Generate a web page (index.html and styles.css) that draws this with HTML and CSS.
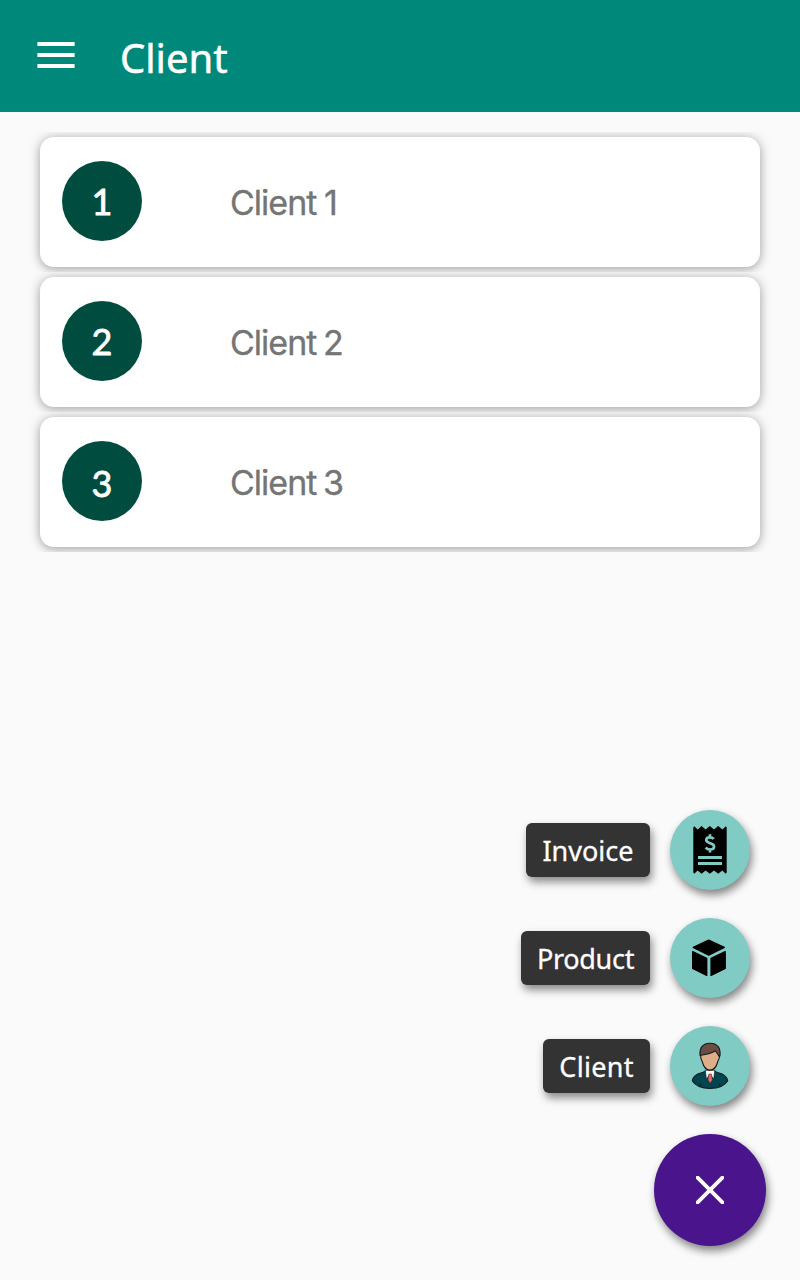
FILE: index.html
```html
<!DOCTYPE html>
<html lang="en">
<head>
<meta charset="utf-8">
<title>Client</title>
<link rel="stylesheet" href="styles.css">
</head>
<body>
<header class="app-bar">
  <svg class="menu-icon" width="38" height="26" viewBox="0 0 38 26"><path d="M.4 0h37.2v4H.4zM.4 11h37.2v4H.4zM.4 22h37.2v4H.4z" fill="#fff"/></svg>
  <h1 class="title">Client</h1>
</header>
<main class="list">
  <div class="row"><div class="card"><span class="badge">1</span><span class="name">Client <span class="num num-one">1</span></span></div></div>
  <div class="row"><div class="card"><span class="badge">2</span><span class="name">Client <span class="num">2</span></span></div></div>
  <div class="row"><div class="card"><span class="badge badge-low">3</span><span class="name">Client <span class="num">3</span></span></div></div>
</main>
<nav class="fab-menu">
  <div class="action">
    <span class="label label-invoice">Invoice</span>
    <button class="mini" aria-label="Invoice">
      <svg width="80" height="80" viewBox="0 0 80 80">
        <path d="M23.3 17.5l1-1.3 3.3 3.2 4-3.4 4 3.4 4.2-3.4 4.2 3.4 4.2-3.4 4.2 3.4 3.3-3.2 1 1.3v45l-1 1.3-3.3-3.4-4.2 3.4-4.2-3.4-4.2 3.4-4.2-3.4-4 3.4-4-3.4-3.3 3.4-1-1.3z"/>
        <path d="M28 46h24v3H28zM28 52h24v3H28z" fill="#80cbc4"/>
        <path d="M43.8 29c-1-1.2-2.3-1.7-4-1.7-2.2 0-3.5 1.1-3.5 2.8 0 4.1 7.8 2.1 7.8 6.4 0 1.8-1.5 3-4 3-1.9 0-3.5-.7-4.4-2M40 24.3v3M40 39.5v3" fill="none" stroke="#80cbc4" stroke-width="2.7"/>
      </svg>
    </button>
  </div>
  <div class="action">
    <span class="label label-product">Product</span>
    <button class="mini" aria-label="Product">
      <svg width="80" height="80" viewBox="0 0 80 80">
        <g stroke="#000" stroke-width="1.4" stroke-linejoin="round"><path d="M38.7 22.2L54.3 29.3 38.7 37 23.2 29.3z"/><path d="M22.7 33.7l14 6.8v16.9l-14-7z"/><path d="M55.2 33.7l-14.1 6.8v16.9l14.1-7z"/></g>
      </svg>
    </button>
  </div>
  <div class="action">
    <span class="label label-client">Client</span>
    <button class="mini" aria-label="Client">
      <svg width="80" height="80" viewBox="0 0 80 80">
        <g stroke="#101c1e" stroke-width="1.1" stroke-linejoin="round">
          <path d="M35.5 44.5c-1 1.2-2 1.7-4 2.2-5.5 1.3-8.6 3.9-9.2 8.1 2.8 4.8 9.5 7.6 17.7 7.6s15-2.8 17.7-7.6c-.7-4.2-3.9-6.8-9.3-8.1-2-.5-3-1-4-2.2z" fill="#004651"/>
          <path d="M35.4 44.2l1 8.8L40 48.4l3.7 4.6 1.1-8.8z" fill="#fff" stroke-width=".6"/>
          <path d="M38.8 48h2.6l1.1 6-2.3 3.4-2.4-3.4z" fill="#e46b60" stroke-width=".5"/>
          <path d="M30.6 26l.2 5.2c0 2 .9 2.6 1.4 4.3 1.2 4.7 3.6 8.6 7.8 8.6s6.6-3.9 7.8-8.6c.5-1.7 1.4-2.3 1.6-4.3L49 25l-8-2z" fill="#dfad89"/>
          <path d="M30.1 29.5c-.8-7.9 2.8-12.2 9.9-12.2s10.8 4.3 10 12.2l-.5 1.2-4.2-6c-3.7 3.5-9.1 3.3-15.2 4.8z" fill="#6d4c41"/>
          <path d="M30.3 57.5v3M49.7 57.5v3" fill="none"/>
        </g>
      </svg>
    </button>
  </div>
  <button class="fab" aria-label="Close">
    <svg width="28" height="28" viewBox="0 0 28 28"><path d="M1.6 1.6l24.8 24.8M26.4 1.6L1.6 26.4" stroke="#fff" stroke-width="3.8" stroke-linecap="round"/></svg>
  </button>
</nav>
</body>
</html>
```
FILE: styles.css
```css
* { box-sizing: border-box; }
body {
  margin: 0;
  width: 800px;
  height: 1280px;
  display: flex;
  flex-direction: column;
  background: #fafafa;
  font-family: "Noto Sans", "Open Sans", sans-serif;
}
button { border: 0; padding: 0; }
svg { display: block; }
.app-bar {
  height: 112px;
  flex: none;
  display: flex;
  align-items: center;
  padding: 0 37px 2px;
  background: #00897b;
}
.title {
  margin: 5px 0 0 45px;
  font-size: 40px;
  line-height: 54px;
  font-weight: 400;
  -webkit-text-stroke: .5px #fff;
  color: #fff;
}
.list { padding-top: 20px; }
.row {
  height: 140px;
  padding: 5px 40px;
  overflow: hidden;
}
.card {
  height: 130px;
  display: flex;
  align-items: center;
  padding: 0 22px 2px;
  border-radius: 14px;
  background: #fff;
  box-shadow: 0 3px 8px rgba(0, 0, 0, .2), 0 0 14px rgba(0, 0, 0, .2);
}
.badge {
  width: 80px;
  height: 80px;
  border-radius: 50%;
  display: flex;
  align-items: center;
  justify-content: center;
  background: #004d40;
  color: #fff;
  font: 400 36px/44px Lato, sans-serif;
  -webkit-text-stroke: .8px #fff;
}
.badge-low { padding-top: 3px; }
.name {
  margin: 4px 0 0 88px;
  color: #757575;
  font: 400 34px/42px Inter, sans-serif;
  letter-spacing: -1px;
  -webkit-text-stroke: .35px #757575;
}
.num { display: inline-block; margin-left: -2px; }
.num-one { margin-left: -1px; }
.fab-menu {
  margin-top: auto;
  padding: 0 34px 34px;
  display: flex;
  flex-direction: column;
  align-items: flex-end;
  gap: 28px;
}
.action {
  display: flex;
  align-items: center;
  gap: 20px;
  margin-right: 16px;
}
.label {
  height: 54px;
  border-radius: 6px;
  display: flex;
  align-items: center;
  justify-content: center;
  background: #333;
  color: #fff;
  font-size: 27px;
  -webkit-text-stroke: .3px #fff;
  box-shadow: 2px 5px 9px rgba(0, 0, 0, .45);
}
.label-invoice { width: 124px; }
.label-product { width: 129px; letter-spacing: -.3px; }
.label-client { width: 107px; letter-spacing: .3px; }
.mini {
  width: 80px;
  height: 80px;
  border-radius: 50%;
  background: #80cbc4;
  box-shadow: 2px 5px 9px rgba(0, 0, 0, .48);
}
.fab {
  width: 112px;
  height: 112px;
  border-radius: 50%;
  display: flex;
  align-items: center;
  justify-content: center;
  background: #4a148c;
  box-shadow: 2px 5px 9px rgba(0, 0, 0, .48);
}
```
